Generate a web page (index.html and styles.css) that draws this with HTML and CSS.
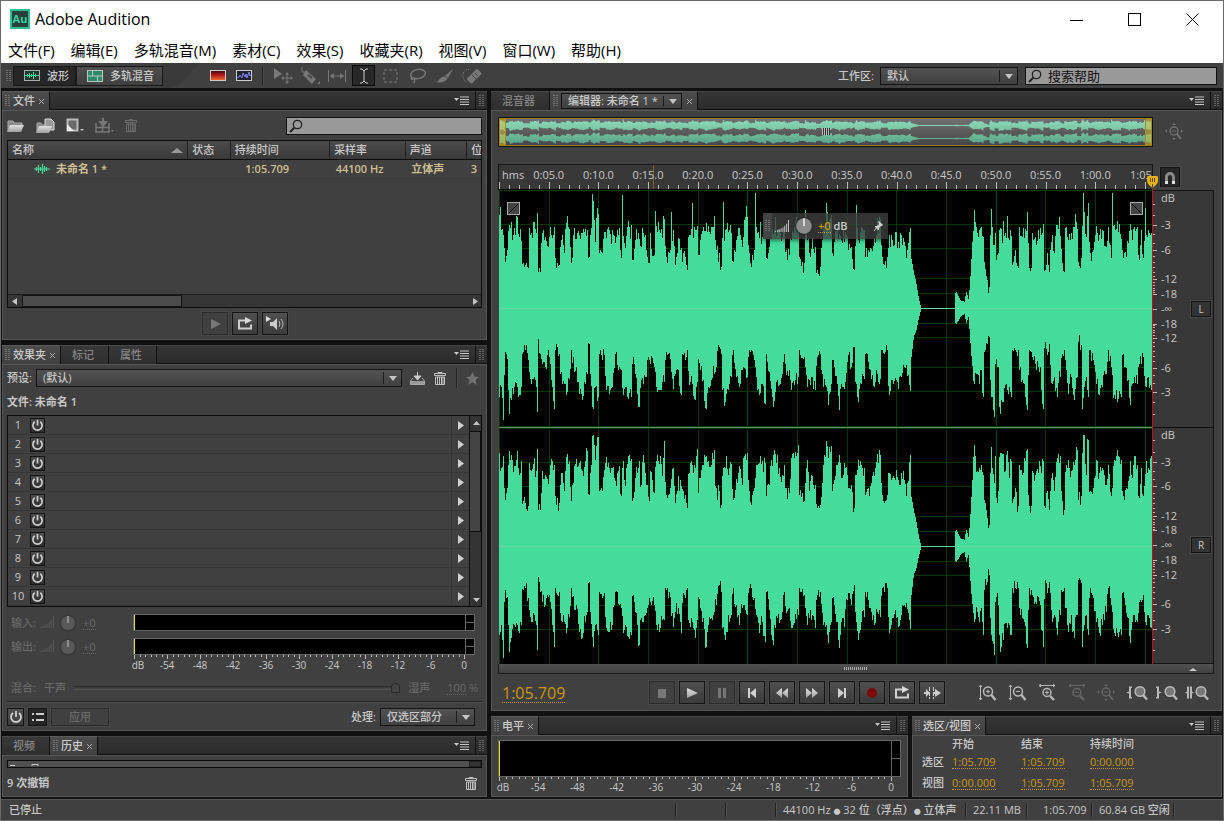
FILE: index.html
```
<!DOCTYPE html>
<html lang="zh-CN">
<head>
  <meta charset="UTF-8" />
  <meta name="viewport" content="width=device-width, initial-scale=1.0" />
  <title>Adobe Audition</title>
  <link rel="stylesheet" href="styles.css">
</head>
<body>

  <svg class="sprite" width="0" height="0" aria-hidden="true">
    <defs>
      <linearGradient id="steel" x1="0" y1="0" x2="0" y2="1"><stop offset="0" stop-color="#e2e2e2"/><stop offset="1" stop-color="#a0a0a0"/></linearGradient>
      <linearGradient id="heat" x1="0" y1="0" x2="0" y2="1"><stop offset="0" stop-color="#3c0818"/><stop offset="0.45" stop-color="#b01818"/><stop offset="1" stop-color="#f07030"/></linearGradient>
      <linearGradient id="over" x1="0" y1="0" x2="0" y2="1"><stop offset="0" stop-color="#8fdcbc"/><stop offset="1" stop-color="#58a385"/></linearGradient>
    </defs>
    <symbol id="i-grip" viewBox="0 0 5 12"><path d="M1 0v12M4 0v12" stroke="#999" stroke-width="1" stroke-dasharray="1 1"/></symbol>
    <symbol id="i-x" viewBox="0 0 7 7"><path d="M1 1l5 5M6 1l-5 5" stroke="#aaa" fill="none"/></symbol>
    <symbol id="i-menu" viewBox="0 0 15 9"><path d="M0 2h5l-2.500 3z" fill="#c8c8c8"/><path d="M6 1h9M6 3.500h9M6 6h9M6 8.500h9" stroke="#c8c8c8"/></symbol>
    <symbol id="i-search" viewBox="0 0 14 14"><circle cx="8.500" cy="5.500" r="4.200" fill="none" stroke="#222" stroke-width="1.300"/><path d="M5.500 8.500L1 13" stroke="#222" stroke-width="2"/></symbol>
    <symbol id="i-power" viewBox="0 0 14 14"><path d="M4 3a5 5 0 1 0 6 0" fill="none" stroke="#cfcfcf" stroke-width="1.800"/><path d="M7 1v6" stroke="#cfcfcf" stroke-width="1.800"/></symbol>
    <symbol id="i-trash" viewBox="0 0 12 13"><path d="M4 1.500V.5h4v1M.5 3.500v-2h11v2z" fill="none" stroke="currentColor"/><path d="M1.500 5h9V12.500h-9z" fill="none" stroke="currentColor"/><path d="M3.500 5v7M5.500 5v7M7.500 5v7M9 5v7" stroke="currentColor"/></symbol>
    <symbol id="i-loop" viewBox="0 0 16 14"><path d="M9 3.500H2v8h12V7.500" fill="none" stroke="#d0d0d0" stroke-width="2"/><path d="M8 0l7 3.500L8 7z" fill="#d8d8d8"/></symbol>
    <symbol id="i-lens" viewBox="0 0 20 18">
      <circle cx="11" cy="7.500" r="4.500" fill="none" stroke="currentColor" stroke-width="1.500"/><path d="M14.500 11l4 5" stroke="currentColor" stroke-width="2.400"/>
    </symbol>
    <symbol id="i-lens-full" viewBox="0 0 14 18">
      <circle cx="6" cy="7.500" r="4.800" fill="#777" stroke="#bbb" stroke-width="1.500"/><path d="M9 11l4 4.500" stroke="#bbb" stroke-width="2.400"/>
    </symbol>
    <symbol id="i-knob" viewBox="0 0 18 18"><circle cx="9" cy="9" r="8.500" fill="#2a2a2a" opacity=".6"/><circle cx="9" cy="9" r="7" fill="currentColor"/><path d="M9 2v7" stroke="#fff" stroke-width="1.200"/></symbol>
    <symbol id="i-steps" viewBox="0 0 16 14"><path d="M.5 13v-1M2.500 13v-2M4.500 13v-3M6.500 13v-4M8.500 13V8M10.500 13V6M12.500 13V4M14.500 13V0" stroke="currentColor"/></symbol>
    <symbol id="i-wave" viewBox="0 0 16 12"><path d="M0 6h16M2.500 4v4M4.500 2v8M6.500 4v4M8.500 1v10M10.500 3v6M12.500 4v4" stroke="#45dc9b" stroke-width="1.200"/></symbol>
  </svg>

  <div class="app">
    <header class="titlebar">
      <svg class="logo" viewBox="0 0 20 20"><rect x="1" y="1" width="18" height="18" fill="#274039" stroke="#2fbf93" stroke-width="2"/><text x="10" y="14" text-anchor="middle" class="logo-text">Au</text></svg>
      <h1>Adobe Audition</h1>
      <div class="window-buttons">
        <button aria-label="最小化"><svg width="13" height="13"><path d="M0 7.500h13" stroke="#000"/></svg></button>
        <button aria-label="最大化"><svg width="13" height="13"><rect x=".5" y=".5" width="12" height="12" fill="none" stroke="#000"/></svg></button>
        <button aria-label="关闭"><svg width="13" height="13"><path d="M.5.5l12 12M12.500.5l-12 12" stroke="#000" fill="none"/></svg></button>
      </div>
    </header>

    <nav class="menubar">
      <a href="#">文件(F)</a><a href="#">编辑(E)</a><a href="#">多轨混音(M)</a><a href="#">素材(C)</a><a href="#">效果(S)</a><a href="#">收藏夹(R)</a><a href="#">视图(V)</a><a href="#">窗口(W)</a><a href="#">帮助(H)</a>
    </nav>

    <div class="toolbar">
      <svg class="grip tall"><use href="#i-grip"/></svg>
      <button class="mode active"><svg width="16" height="11"><rect x=".5" y=".5" width="15" height="10" fill="#1f3a30" stroke="#aaa"/><path d="M1 5.500h14M3.500 4v3M5.500 3v5M7.500 4v3M9.500 2v7M11.500 4v3" stroke="#45dc9b"/></svg>波形</button>
      <button class="mode multi"><svg width="16" height="12"><rect width="16" height="12" fill="#2e8a68"/><path d="M0 .5h16M0 6h16M0 11.500h16M.5 0v12M15.500 0v12M5.500 0v6M10.500 6v6" stroke="#b5c8c0" fill="none"/></svg>多轨混音</button>
      <svg class="slope" viewBox="0 0 42 25" preserveAspectRatio="none"><path d="M0 0h42C26 2 26 23 6 25H0z" fill="#3a3a3a"/></svg>
      <button class="tool view" aria-label="频谱"><svg width="16" height="11"><rect x=".5" y=".5" width="15" height="10" fill="url(#heat)" stroke="#ccc"/></svg></button>
      <button class="tool view" aria-label="音高"><svg width="16" height="11"><rect x=".5" y=".5" width="15" height="10" fill="#22222c" stroke="#ccc"/><path d="M1 8l2-1 1-2 2 3 1-5 2 4 1-3 1 4 2-6 1 4 1-1" stroke="#8080ff" fill="none"/></svg></button>
      <span class="divider"></span>
      <button class="tool" aria-label="移动" disabled><svg width="20" height="18"><path d="M1 1l8 6-8 5z" fill="#777"/><path d="M14 7v8M10 11h8" stroke="#777"/><path d="M14 5l-2 2.500h4zM14 17l-2-2.500h4zM8 11l2.500-2v4zM20 11l-2.500-2v4z" fill="#777"/></svg></button>
      <button class="tool" aria-label="剃刀" disabled><svg width="20" height="18"><path d="M6 3l10 9-4 5L3 8z" fill="#777"/><path d="M2 0v5h5" stroke="#777" fill="none"/><path d="M8 8l4 3" stroke="#444" stroke-width="2"/><path d="M20 14v3h-3z" fill="#777"/></svg></button>
      <button class="tool" aria-label="滑动" disabled><svg width="20" height="18"><path d="M1.500 3v12M18.500 3v12M3 9h14" stroke="#777"/><path d="M3 9l4-3v6zM17 9l-4-3v6z" fill="#777"/></svg></button>
      <button class="tool active" aria-label="时间选择"><svg width="12" height="16"><path d="M2 1h2l2 2 2-2h2M6 3v10M2 15h2l2-2 2 2h2" stroke="#ccc" fill="none"/></svg></button>
      <button class="tool" aria-label="框选" disabled><svg width="16" height="14"><rect x="1" y="1" width="13" height="12" fill="none" stroke="#777" stroke-dasharray="3 2"/></svg></button>
      <button class="tool" aria-label="套索" disabled><svg width="20" height="16"><ellipse cx="10" cy="6" rx="7.500" ry="4.500" fill="none" stroke="#777" stroke-width="1.500" transform="rotate(-10 10 6)"/><path d="M4 9c-2 2 0 3 3 2l-1 4" fill="none" stroke="#777" stroke-width="1.300"/></svg></button>
      <button class="tool" aria-label="画笔" disabled><svg width="18" height="16"><path d="M17 1L9 8l3 2zM9 8.500L11.500 11C9 14 5 15 0 14c4-1 4-6 9-5.500z" fill="#777"/></svg></button>
      <button class="tool" aria-label="污点修复" disabled><svg width="20" height="16"><path d="M6 11L15 2l3.500 3.500-9 9z" fill="#777" stroke="#777" stroke-width="2" stroke-linejoin="round"/><path d="M7 1.500C3 1 1 4 1 7s1 6 4 8" fill="none" stroke="#777" stroke-dasharray="1 1"/><path d="M10 7l4 4M13 5l3 3" stroke="#444"/></svg></button>
      <span class="spacer"></span>
      <label class="caption" for="workspace">工作区:</label>
      <span class="select workspace"><select id="workspace"><option>默认</option></select></span>
      <label class="search help"><svg width="14" height="14"><use href="#i-search"/></svg><input type="text" value="搜索帮助" aria-label="搜索帮助"></label>
    </div>

    <main class="workspace-area">
      <div class="left-column">

        <section class="panel files">
          <div class="tabs">
            <button class="tab active"><svg class="grip"><use href="#i-grip"/></svg>文件<svg class="close"><use href="#i-x"/></svg></button>
            <span class="tab-fill"></span><button class="panel-menu" aria-label="面板菜单"><svg width="15" height="9"><use href="#i-menu"/></svg></button><span class="tab-end"><svg class="grip"><use href="#i-grip"/></svg></span>
          </div>
          <div class="body">
            <div class="file-tools">
              <button aria-label="打开"><svg width="18" height="14"><path d="M1 12V2h5l1 2h8v3" fill="#888" stroke="#aaa"/><path d="M0 13l3-7h14l-3 7z" fill="url(#steel)"/></svg></button>
              <button aria-label="导入"><svg width="19" height="16"><path d="M1 14V5h4l1 2h8v3" fill="#888" stroke="#aaa"/><path d="M9 1h6l3 3v8H9z" fill="#999" stroke="#ddd"/><path d="M0 15l3-7h13l-3 7z" fill="url(#steel)"/></svg></button>
              <button aria-label="新建"><svg width="18" height="15"><rect x="1.500" y="1.500" width="10" height="11" fill="#6a6a6a" stroke="#bbb" stroke-width="2"/><path d="M1 6l7 7H1z" fill="#eee"/><path d="M14 11h4l-2 2z" fill="#ccc"/></svg></button>
              <button aria-label="插入" disabled><svg width="19" height="16"><path d="M8 0v5M5 4l3 4 3-4z" stroke="#777" stroke-width="2" fill="#777"/><path d="M1 5v9h13V5M1 9.500h13M7.500 9.500v5" stroke="#777" fill="none" stroke-width="1.500"/><path d="M16 12h3l-1.500 2z" fill="#777"/></svg></button>
              <button class="dim" aria-label="关闭文件" disabled><svg width="12" height="13"><use href="#i-trash"/></svg></button>
              <label class="search"><svg width="14" height="14"><use href="#i-search"/></svg><input type="text" aria-label="搜索文件"></label>
            </div>
            <div class="file-list">
              <table>
                <colgroup><col class="c-name"><col class="c-state"><col class="c-time"><col class="c-rate"><col class="c-chan"><col></colgroup>
                <thead><tr><th>名称<svg class="sort" width="12" height="6"><path d="M0 6l6-5 6 5z" fill="#999"/></svg></th><th>状态</th><th>持续时间</th><th>采样率</th><th>声道</th><th>位</th></tr></thead>
                <tbody><tr><td><svg width="16" height="12"><use href="#i-wave"/></svg>未命名 1 *</td><td></td><td>1:05.709</td><td>44100 Hz</td><td>立体声</td><td>3</td></tr></tbody>
              </table>
              <div class="hscroll"><svg width="14" height="11"><path d="M9 2v7L4 5.500z" fill="#c4c4c4"/></svg><span class="thumb"></span><svg width="14" height="11"><path d="M6 2v7l5-3.500z" fill="#c4c4c4"/></svg></div>
            </div>
            <div class="preview-buttons">
              <button class="btn" aria-label="播放" disabled><svg width="12" height="12"><path d="M2 1l10 5-10 5z" fill="#777"/></svg></button>
              <button class="btn" aria-label="循环"><svg width="16" height="14"><use href="#i-loop"/></svg></button>
              <button class="btn" aria-label="自动播放"><svg width="18" height="15"><path d="M0 0l5 3-5 3z" fill="#ddd"/><path d="M4 6h3l4-4v12l-4-4H4z" fill="#ccc"/><path d="M13 5q2 3 0 6M15 3q4 5 0 10" stroke="#bbb" fill="none"/></svg></button>
            </div>
          </div>
        </section>

        <section class="panel effects">
          <div class="tabs">
            <button class="tab active"><svg class="grip"><use href="#i-grip"/></svg>效果夹<svg class="close"><use href="#i-x"/></svg></button>
            <button class="tab">标记</button><button class="tab">属性</button>
            <span class="tab-fill"></span><button class="panel-menu" aria-label="面板菜单"><svg width="15" height="9"><use href="#i-menu"/></svg></button><span class="tab-end"><svg class="grip"><use href="#i-grip"/></svg></span>
          </div>
          <div class="body">
            <div class="preset-row">
              <label for="preset">预设:</label>
              <span class="select preset"><select id="preset"><option>(默认)</option></select></span>
              <button aria-label="保存"><svg width="15" height="13"><path d="M7.500 0v6M4 4l3.500 4L11 4z" fill="#ccc" stroke="#ccc"/><path d="M3 6L.5 9v3.500h14V9L12 6" fill="none" stroke="#aaa"/><path d="M1 9h13v3H1z" fill="#999"/></svg></button>
              <button class="lit" aria-label="删除"><svg width="12" height="13"><use href="#i-trash"/></svg></button>
              <span class="divider"></span>
              <button aria-label="收藏" disabled><svg width="13" height="13"><path d="M6.500 0l2 4.500 4.500.4-3.500 3 1.200 5-4.200-2.700L2.300 13l1.200-5L0 5l4.500-.5z" fill="#707070"/></svg></button>
            </div>
            <p class="target">文件: 未命名 1</p>
            <div class="rack">
              <ol class="slots" id="slots"></ol>
              <div class="vscroll"><svg width="12" height="15"><path d="M3 9h7L6.500 5z" fill="#c4c4c4"/></svg><span class="thumb"></span><svg width="12" height="12"><path d="M3 4h7L6.500 8z" fill="#c4c4c4"/></svg></div>
            </div>
            <div class="io">
              <div class="io-row"><span>输入:</span><svg class="steps" width="15" height="13"><use href="#i-steps"/></svg><svg class="knob" width="18" height="18"><use href="#i-knob"/></svg><span class="gain"><u>+0</u></span><div class="meter"><i></i></div></div>
              <div class="io-row"><span>输出:</span><svg class="steps" width="15" height="13"><use href="#i-steps"/></svg><svg class="knob" width="18" height="18"><use href="#i-knob"/></svg><span class="gain"><u>+0</u></span><div class="meter"><i></i></div></div>
              <div class="db-scale indent"></div>
            </div>
            <div class="mix-row"><label for="mix">混合:</label><span>干声</span><input id="mix" type="range" value="100" disabled><span>湿声</span><span class="pct"><u>100</u> %</span></div>
            <div class="rack-footer">
              <button class="btn small" aria-label="开关"><svg width="14" height="14"><use href="#i-power"/></svg></button>
              <button class="btn small pressed" aria-label="列表"><svg width="14" height="12"><path d="M1 3h2M1 9h2M5 3h8M5 9h8" stroke="#ccc" stroke-width="2"/></svg></button>
              <button class="btn apply" disabled>应用</button>
              <span class="spacer"></span>
              <label for="process">处理:</label>
              <span class="select process"><select id="process"><option>仅选区部分</option></select></span>
            </div>
          </div>
        </section>

        <section class="panel history">
          <div class="tabs">
            <button class="tab">视频</button>
            <button class="tab active"><svg class="grip"><use href="#i-grip"/></svg>历史<svg class="close"><use href="#i-x"/></svg></button>
            <span class="tab-fill"></span><button class="panel-menu" aria-label="面板菜单"><svg width="15" height="9"><use href="#i-menu"/></svg></button><span class="tab-end"><svg class="grip"><use href="#i-grip"/></svg></span>
          </div>
          <div class="body">
            <div class="history-list"><svg width="40" height="5"><path d="M2 4.500h5M24 5V3.500h6V5" stroke="#ccc" fill="none"/></svg><span></span></div>
            <div class="history-foot"><span>9 次撤销</span><button class="lit" aria-label="删除"><svg width="12" height="13"><use href="#i-trash"/></svg></button></div>
          </div>
        </section>
      </div>

      <div class="right-column">
        <section class="panel editor">
          <div class="tabs">
            <button class="tab">混音器</button>
            <div class="tab active"><svg class="grip"><use href="#i-grip"/></svg><span class="select file"><select aria-label="编辑器"><option>编辑器: 未命名 1 *</option></select></span><svg class="close"><use href="#i-x"/></svg></div>
            <span class="tab-fill"></span><button class="panel-menu" aria-label="面板菜单"><svg width="15" height="9"><use href="#i-menu"/></svg></button><span class="tab-end"><svg class="grip"><use href="#i-grip"/></svg></span>
          </div>
          <div class="body">
            <div class="overview-row">
              <div class="overview"><svg viewBox="0 0 1959 1416" preserveAspectRatio="none"><path id="overview-path" fill="url(#over)"/></svg><b class="handle"></b><b class="handle end"></b><b class="mid-grip"></b></div>
              <div class="side"><svg class="off" width="20" height="18"><circle cx="9" cy="8" r="4" fill="none" stroke="currentColor" stroke-width="1.500"/><path d="M12 11l4 5" stroke="currentColor" stroke-width="2"/><path d="M7 8h4" stroke="currentColor"/><path d="M9 0l2 2H7zM0 8l2-2v4zM18 8l-2-2v4zM9 17l-2-2h4z" fill="currentColor"/></svg></div>
            </div>
            <div class="ruler-row">
              <div class="ruler"><span class="unit">hms</span><div class="ruler-clip" id="ruler"></div><svg class="playhead" width="11" height="14"><path d="M1 0h9q1 0 1 2v3q0 3-5.500 7Q0 8 0 5V2q0-2 1-2z" fill="#e8b010"/><path d="M3.500 2v4M5.500 2v4M7.500 2v4M5.500 8v6" stroke="#6a4a00"/></svg></div>
              <div class="side"><button class="btn snap" aria-label="对齐"><svg width="12" height="13"><path d="M2.500 13V6a3.500 3.500 0 0 1 7 0v7" fill="none" stroke="#888" stroke-width="3"/><path d="M2.500 13v-3M9.500 13v-3" stroke="#ddd" stroke-width="3"/></svg></button></div>
            </div>
            <div class="wave-row">
              <div class="wave" id="wave">
                <svg class="channel" viewBox="0 0 1959 708" preserveAspectRatio="none"></svg>
                <svg class="channel" viewBox="0 0 1959 708" preserveAspectRatio="none"></svg>
                <svg class="fade" width="13" height="13"><rect x=".5" y=".5" width="12" height="12" fill="#444" stroke="#aaa"/><path d="M2 11l9-9" stroke="#000"/></svg>
                <svg class="fade out" width="13" height="13"><rect x=".5" y=".5" width="12" height="12" fill="#444" stroke="#aaa"/><path d="M2 2l9 9" stroke="#000"/></svg>
                <div class="hud"><span class="hud-grip"><svg class="grip"><use href="#i-grip"/></svg></span><svg width="15" height="13"><use href="#i-steps"/></svg><svg class="knob" width="20" height="20"><use href="#i-knob"/></svg><span><u>+0</u> dB</span><svg class="pin" width="9" height="10"><path d="M5 0l4 4-1 1-1 0-2 2 0 2-1 0-3-3 0-1 2 0 2-2-1-2z" fill="#ccc"/><path d="M3 6L0 10" stroke="#ccc"/></svg></div>
              </div>
              <div class="levels">
                <div class="level-scale"><span class="unit">dB</span><button class="btn chan">L</button></div>
                <div class="level-scale"><span class="unit">dB</span><button class="btn chan">R</button></div>
              </div>
            </div>
            <div class="wave-scroll"><i></i><svg width="8" height="4"><path d="M0 4l4-3 4 3z" fill="#ccc"/></svg></div>
            <div class="transport">
              <output class="time">1:05.709</output>
              <button class="btn" aria-label="停止" disabled><svg width="16" height="14"><path d="M4 3h8v9H4z" fill="#777"/></svg></button>
              <button class="btn" aria-label="播放"><svg width="16" height="14"><path d="M3 2l11 5-11 5z" fill="url(#steel)"/></svg></button>
              <button class="btn" aria-label="暂停" disabled><svg width="16" height="14"><path d="M4 2h3v10H4zM9 2h3v10H9z" fill="#777"/></svg></button>
              <button class="btn" aria-label="上一个"><svg width="16" height="14"><path d="M4 2h2v10H4zM12 2v10L6 7z" fill="#d0d0d0"/></svg></button>
              <button class="btn" aria-label="快退"><svg width="16" height="14"><path d="M8 2v10L2 7zM14 2v10L8 7z" fill="url(#steel)"/></svg></button>
              <button class="btn" aria-label="快进"><svg width="16" height="14"><path d="M2 2v10l6-5zM8 2v10l6-5z" fill="url(#steel)"/></svg></button>
              <button class="btn" aria-label="下一个"><svg width="16" height="14"><path d="M10 2h2v10h-2zM4 2v10l6-5z" fill="#d0d0d0"/></svg></button>
              <button class="btn" aria-label="录制"><svg width="16" height="14"><circle cx="8" cy="7" r="5" fill="#7c0a0a"/></svg></button>
              <button class="btn" aria-label="循环播放"><svg width="16" height="14"><use href="#i-loop"/></svg></button>
              <button class="btn" aria-label="跳过"><svg width="17" height="14"><path d="M5.500 1v12M9.500 1v12" stroke="#ccc" stroke-dasharray="4 1"/><path d="M0 6h2V3l4 4-4 4V8H0zM9 6h2V3l6 4-6 4V8H9z" fill="#ccc"/></svg></button>
              <span class="spacer"></span>
              <button class="zoom-btn" aria-label="放大振幅"><svg width="20" height="18"><use href="#i-lens"/><path d="M9 7.500h4M11 5.500v4M3.500 1v15M2 3l1.500-2L5 3M2 14l1.500 2L5 14" stroke="currentColor" fill="none"/></svg></button>
              <button class="zoom-btn" aria-label="缩小振幅"><svg width="20" height="18"><use href="#i-lens"/><path d="M9 7.500h4M3.500 1v15M2 3l1.500-2L5 3M2 14l1.500 2L5 14" stroke="currentColor" fill="none"/></svg></button>
              <button class="zoom-btn" aria-label="放大时间"><svg width="20" height="18"><path d="M2 1.500h16M4 0L2 1.500 4 3M16 0l2 1.500L16 3" stroke="currentColor" fill="none"/><circle cx="10" cy="8.500" r="4" fill="none" stroke="currentColor" stroke-width="1.500"/><path d="M13 12l4 4" stroke="currentColor" stroke-width="2.400"/><path d="M8 8.500h4M10 6.500v4" stroke="currentColor"/></svg></button>
              <button class="zoom-btn off" aria-label="缩小时间" disabled><svg width="20" height="18"><path d="M2 1.500h16M4 0L2 1.500 4 3M16 0l2 1.500L16 3" stroke="currentColor" fill="none"/><circle cx="10" cy="8.500" r="4" fill="none" stroke="currentColor" stroke-width="1.500"/><path d="M13 12l4 4" stroke="currentColor" stroke-width="2.400"/><path d="M8 8.500h4" stroke="currentColor"/></svg></button>
              <button class="zoom-btn off" aria-label="全部缩小" disabled><svg width="20" height="18"><circle cx="9" cy="8" r="4" fill="none" stroke="currentColor" stroke-width="1.500"/><path d="M12 11l4 5" stroke="currentColor" stroke-width="2"/><path d="M7 8h4" stroke="currentColor"/><path d="M9 0l2 2H7zM0 8l2-2v4zM18 8l-2-2v4zM9 17l-2-2h4z" fill="currentColor"/></svg></button>
              <button class="zoom-btn" aria-label="缩放入点"><svg width="22" height="18"><use href="#i-lens-full" x="8" width="14" height="18"/><path d="M6 2.500H3v5L0 8.500l3 1v5h3v-1.500H5v-9h1z" fill="currentColor"/></svg></button>
              <button class="zoom-btn" aria-label="缩放出点"><svg width="22" height="18"><use href="#i-lens-full" x="8" width="14" height="18"/><path d="M0 2.500h3v5l3 1-3 1v5H0V13h1V4H0z" fill="currentColor"/></svg></button>
              <button class="zoom-btn" aria-label="缩放选区"><svg width="24" height="18"><use href="#i-lens-full" x="10" width="14" height="18"/><path d="M4 2.500H2v5L0 8.500l2 1v5h2zM5 2.500h2v5l2 1-2 1v5H5z" fill="currentColor"/></svg></button>
            </div>
          </div>
        </section>

        <div class="bottom-row">
          <section class="panel meters">
            <div class="tabs">
              <button class="tab active"><svg class="grip"><use href="#i-grip"/></svg>电平<svg class="close"><use href="#i-x"/></svg></button>
              <span class="tab-fill"></span><button class="panel-menu" aria-label="面板菜单"><svg width="15" height="9"><use href="#i-menu"/></svg></button><span class="tab-end"><svg class="grip"><use href="#i-grip"/></svg></span>
            </div>
            <div class="body"><div class="meter big"><i></i></div><div class="db-scale"></div></div>
          </section>
          <section class="panel selection">
            <div class="tabs">
              <button class="tab active"><svg class="grip"><use href="#i-grip"/></svg>选区/视图<svg class="close"><use href="#i-x"/></svg></button>
              <span class="tab-fill"></span><button class="panel-menu" aria-label="面板菜单"><svg width="15" height="9"><use href="#i-menu"/></svg></button><span class="tab-end"><svg class="grip"><use href="#i-grip"/></svg></span>
            </div>
            <div class="body">
              <table>
                <thead><tr><td></td><th>开始</th><th>结束</th><th>持续时间</th></tr></thead>
                <tbody>
                  <tr><th>选区</th><td><u>1:05.709</u></td><td><u>1:05.709</u></td><td><u>0:00.000</u></td></tr>
                  <tr><th>视图</th><td><u>0:00.000</u></td><td><u>1:05.709</u></td><td><u>1:05.709</u></td></tr>
                </tbody>
              </table>
            </div>
          </section>
        </div>
      </div>
    </main>

    <footer class="status">
      <span class="state">已停止</span>
      <span class="cell blank"></span><span class="cell blank"></span>
      <span class="cell format">44100 Hz <small>●</small> 32 位（浮点）<small>●</small> 立体声</span>
      <span class="cell size">22.11 MB</span>
      <span class="cell length">1:05.709</span>
      <span class="cell free">60.84 GB 空闲</span>
      <span class="cell tail"></span>
    </footer>
  </div>

  <script src="app.js"></script>
</body>
</html>
```
FILE: styles.css
```
*, *::before, *::after {
  box-sizing: border-box;
}

body {
  margin: 0;
  background: #111;
  color: #c8c8c8;
  font-family: "Open Sans", "Noto Sans CJK SC", sans-serif;
  font-size: 11px;
  font-weight: 500;
  line-height: 16px;
}

button, input, select {
  font: inherit;
  color: inherit;
  padding: 0;
  margin: 0;
  border: 0;
  background: none;
}

svg {
  flex: none;
  display: block;
}

p, h1, ol {
  margin: 0;
  padding: 0;
}

u {
  text-decoration: none;
  border-bottom: 1px dotted currentColor;
  display: inline-block;
  line-height: 13px;
}

.sprite {
  position: absolute;
}

.app {
  min-height: 100vh;
  display: flex;
  flex-direction: column;
  border: 1px solid #6a6a6a;
}

.spacer {
  flex: 1;
}

/* title + menu */
.titlebar {
  height: 36px;
  background: #fff;
  color: #000;
  display: flex;
  align-items: center;
  padding: 0 2px 0 9px;
}

.titlebar h1 {
  flex: 1;
  margin-left: 5px;
  font-size: 16px;
  font-weight: 400;
  line-height: 24px;
}

.logo {
  width: 20px;
  height: 20px;
}

.logo-text {
  fill: #35cfa0;
  font-size: 11px;
  font-weight: 700;
}

.window-buttons {
  display: flex;
}

.window-buttons button {
  width: 58px;
  height: 36px;
  display: flex;
  align-items: center;
  justify-content: center;
}

.menubar {
  height: 26px;
  background: #fff;
  display: flex;
  gap: 16px;
  padding: 0 7px;
}

.menubar a {
  color: #000;
  font-size: 15px;
  font-weight: 400;
  line-height: 26px;
  text-decoration: none;
}

/* toolbar */
.toolbar {
  height: 25px;
  margin-bottom: 3px;
  background: #404040;
  display: flex;
  align-items: center;
  padding: 0 6px 0 5px;
}

.grip {
  width: 5px;
  height: 12px;
}

.grip.tall {
  height: 20px;
  margin-right: 2px;
}

.mode {
  height: 20px;
  width: 63px;
  border: 1px solid #1a1a1a;
  background: linear-gradient(#4d4d4d, #404040);
  display: flex;
  align-items: center;
  gap: 7px;
  padding-left: 10px;
}

.mode.active {
  background: #262626;
}

.mode.multi {
  width: 87px;
}

.slope {
  width: 42px;
  height: 25px;
}

.tool {
  width: 27px;
  height: 21px;
  display: flex;
  align-items: center;
  justify-content: center;
}

.tool.view {
  width: 26px;
}

.tool.active {
  width: 23px;
  margin: 0 2px;
  background: #282828;
  border: 1px solid #0c0c0c;
}

.divider {
  width: 2px;
  height: 20px;
  margin: 0 5px;
  border-left: 1px solid #222;
  border-right: 1px solid #4c4c4c;
}

.caption {
  margin-right: 6px;
}

.select {
  display: flex;
  position: relative;
  height: 18px;
  border: 1px solid #141414;
  background: linear-gradient(#525252, #404040);
}

.select select {
  flex: 1;
  min-width: 0;
  appearance: none;
  padding-left: 6px;
  line-height: 16px;
}

.select::before {
  content: "";
  position: absolute;
  right: 17px;
  top: 2px;
  bottom: 2px;
  border-left: 1px solid #1c1c1c;
}

.select::after {
  content: "";
  position: absolute;
  right: 4px;
  top: 6px;
  border: 4px solid transparent;
  border-top: 5px solid #c4c4c4;
  border-bottom: 0;
}

.select.workspace {
  width: 138px;
  margin-right: 7px;
}

.search {
  height: 18px;
  display: flex;
  align-items: center;
  border: 1px solid #111;
  background: #999;
  padding-left: 2px;
}

.search input {
  flex: 1;
  min-width: 0;
  outline: 0;
  color: #111;
  padding-left: 6px;
}

.search.help {
  width: 192px;
}

.search.help input {
  font-size: 13px;
  font-weight: 400;
}

/* panels */
.workspace-area {
  flex: 1;
  display: flex;
  gap: 4px;
  padding: 0 1px;
}

.left-column,
.right-column {
  display: flex;
  flex-direction: column;
  gap: 5px;
  min-width: 0;
}

.left-column {
  flex: 485;
}

.right-column {
  flex: 731;
}

.panel {
  display: flex;
  flex-direction: column;
  min-width: 0;
}

.tabs {
  height: 19px;
  display: flex;
  background: #1a1a1a;
}

.tab {
  display: flex;
  align-items: center;
  padding: 0 14px 0 11px;
  background: linear-gradient(#383838, #2e2e2e);
  border-top: 1px solid #484848;
  border-right: 1px solid #111;
  color: #858585;
}

.tab.active {
  padding: 0 4px 0 3px;
  gap: 3px;
  background: linear-gradient(#4c4c4c, #404040);
  border-top-color: #5c5c5c;
  color: #ccc;
}

.tab .close {
  width: 7px;
  height: 7px;
}

.tab .select.file {
  width: 121px;
  height: 16px;
  margin-right: 1px;
}

.select.file select {
  line-height: 14px;
}

.select.file::after {
  top: 5px;
}

.tab-fill {
  flex: 1;
}

.tab-fill,
.panel-menu,
.tab-end {
  background: linear-gradient(#353535, #2b2b2b);
  border-top: 1px solid #444;
  border-bottom: 1px solid #111;
}

.panel-menu {
  width: 22px;
  display: flex;
  align-items: center;
  border-right: 1px solid #111;
}

.tab-end {
  width: 11px;
  display: flex;
  align-items: center;
  justify-content: center;
}

.body {
  flex: 1;
  display: flex;
  flex-direction: column;
  border: 1px solid #565656;
  background: #404040;
  padding: 0 4px;
}

.btn {
  width: 26px;
  height: 23px;
  display: flex;
  align-items: center;
  justify-content: center;
  border: 1px solid #151515;
  box-shadow: 0 0 0 1px #484848;
  background: linear-gradient(#505050, #3c3c3c);
}

.btn:disabled {
  border-color: #2c2c2c;
  background: #404040;
  color: #686868;
}

/* files */
.files {
  flex: 1;
}

.file-tools {
  height: 29px;
  display: flex;
  align-items: center;
  gap: 11px;
}

.file-tools .search {
  width: 196px;
  margin-left: auto;
}

.dim {
  color: #6c6c6c;
}

.lit {
  color: #c0c0c0;
}

.file-list {
  flex: 1;
  display: flex;
  flex-direction: column;
  border: 1px solid #0c0c0c;
  overflow: hidden;
}

.file-list table {
  width: 100%;
  table-layout: fixed;
  border-collapse: collapse;
}

.c-name { width: 38%; }
.c-state { width: 9%; }
.c-time { width: 21%; }
.c-rate { width: 16%; }
.c-chan { width: 13%; }

.file-list th,
.file-list td {
  height: 19px;
  padding: 0 4px;
  text-align: left;
  font-weight: 500;
  white-space: nowrap;
  overflow: hidden;
}

.file-list th {
  height: 18px;
  background: linear-gradient(#4a4a4a, #3a3a3a);
  border-bottom: 1px solid #0c0c0c;
}

.file-list th + th {
  border-left: 1px solid #222;
}

.file-list .sort {
  float: right;
  margin-top: 5px;
}

.file-list td {
  color: #cdbf94;
  font-weight: 600;
  border-bottom: 1px solid #383838;
  padding-right: 0;
}

.file-list td svg {
  float: left;
  margin: 2px 6px 0 22px;
}

.file-list td:nth-child(3) {
  padding-left: 15px;
}

.file-list td:nth-child(4),
.file-list td:nth-child(5) {
  padding-left: 6px;
}

.hscroll {
  margin-top: auto;
  height: 13px;
  display: flex;
  align-items: center;
  justify-content: space-between;
  background: #363636;
  border-top: 1px solid #1c1c1c;
}

.hscroll .thumb {
  width: 160px;
  height: 12px;
  margin-right: auto;
  background: #4c4c4c;
  border: 1px solid #141414;
}

.preview-buttons {
  display: flex;
  justify-content: center;
  gap: 4px;
  padding: 4px 0;
}

/* effects rack */
.preset-row {
  display: flex;
  align-items: center;
  margin-top: 3px;
}

.select.preset {
  flex: 1;
  margin: 0 8px 0 4px;
}

.preset-row button + button {
  margin-left: 9px;
}

.preset-row .divider {
  margin: 0 8px 0 10px;
}

.preset-row button:last-child {
  margin-right: 3px;
}

.target {
  margin: 6px 0 5px;
  font-weight: 600;
}

.rack {
  display: flex;
  border: 1px solid #0c0c0c;
}

.slots {
  flex: 1;
  list-style: none;
}

.slots li {
  height: 19px;
  display: flex;
  align-items: center;
  border-bottom: 1px solid #363636;
}

.slots .num {
  width: 20px;
  margin-right: 2px;
  text-align: center;
}

.slots .power {
  width: 15px;
  height: 15px;
  display: flex;
  justify-content: center;
  align-items: center;
  border: 1px solid #151515;
  background: linear-gradient(#4c4c4c, #2c2c2c);
}

.slots .more {
  width: 18px;
  height: 18px;
  margin-left: auto;
  padding-left: 6px;
  border-left: 1px solid #363636;
  display: flex;
  align-items: center;
}

.vscroll {
  width: 12px;
  display: flex;
  flex-direction: column;
  background: #343434;
  border-left: 1px solid #111;
}

.vscroll .thumb {
  height: 101px;
  margin-bottom: auto;
  background: #444;
  border: 1px solid #0e0e0e;
  border-left: 0;
}

.io {
  margin-top: 7px;
  color: #686868;
}

.io-row {
  height: 17px;
  margin-bottom: 7px;
  display: flex;
  align-items: center;
  gap: 4px;
  padding: 0 7px 0 4px;
}

.io-row:nth-child(2) {
  margin-bottom: 0;
}

.io-row span {
  width: 25px;
}

.io-row .gain {
  width: 48px;
  padding-left: 2px;
}

.steps {
  color: #5a5a5a;
}

.knob {
  color: #686868;
}

.io-row .knob {
  opacity: 0.6;
}

.meter {
  flex: 1;
  height: 17px;
  background: #000;
  border: 1px solid #666;
  display: flex;
  justify-content: space-between;
}

.meter::before {
  content: "";
  width: 1px;
  background: #e8e000;
}

.meter i {
  width: 9px;
  border-left: 1px solid #666;
  background: linear-gradient(#666, #666) center / 100% 1px no-repeat;
}

.db-scale {
  position: relative;
  height: 18px;
  margin: 0 10px 0 1px;
  color: #c8c8c8;
  font-size: 10px;
  line-height: 12px;
}

.db-scale.indent {
  margin: 0 18px 0 127px;
}

.db-scale i {
  position: absolute;
  top: 0;
  width: 1px;
  height: 2px;
  background: #bbb;
}

.db-scale i.major {
  height: 4px;
}

.db-scale span {
  position: absolute;
  top: 4px;
  width: 30px;
  margin-left: -15px;
  text-align: center;
}

.db-scale span:first-of-type {
  margin-left: -11px;
}

.mix-row {
  height: 24px;
  margin-top: 3px;
  padding: 0 4px;
  display: flex;
  align-items: center;
  gap: 8px;
  color: #686868;
}

.mix-row input {
  flex: 1;
  appearance: none;
  height: 12px;
  background: linear-gradient(#2a2a2a, #555) center / 100% 4px no-repeat;
}

.mix-row input::-webkit-slider-thumb {
  appearance: none;
  width: 9px;
  height: 10px;
  background: #444;
  border: 1px solid #2a2a2a;
  border-radius: 4px 4px 0 0;
}

.mix-row .pct {
  margin-left: 9px;
}

.rack-footer {
  border-top: 1px solid #222;
  box-shadow: inset 0 1px #4e4e4e;
  margin-top: 1px;
  padding: 6px 7px 4px 0;
  display: flex;
  align-items: center;
  gap: 4px;
}

.btn.small {
  width: 17px;
  height: 18px;
}

.btn.pressed {
  width: 19px;
  background: #262626;
}

.btn.apply {
  width: 58px;
  height: 18px;
}

.select.process {
  width: 95px;
}

/* history */
.history-list {
  height: 8px;
  margin-top: 4px;
  display: flex;
  justify-content: space-between;
  border: 1px solid #0c0c0c;
  background: #505050;
  overflow: hidden;
}

.history-list span {
  width: 12px;
  background: #333;
  border: 1px solid #222;
}

.history-foot {
  height: 28px;
  display: flex;
  justify-content: space-between;
  align-items: center;
  padding: 2px 5px 0 0;
  font-weight: 600;
}

/* editor */
.editor {
  flex: 1;
}

.editor .body {
  padding: 6px 7px 6px 6px;
}

.overview-row,
.ruler-row,
.wave-row {
  display: flex;
}

.side {
  width: 61px;
  padding-left: 7px;
  display: flex;
  align-items: center;
}

.overview-row .side {
  padding-left: 12px;
}

.off {
  color: #707070;
}

.overview-row {
  margin-bottom: 17px;
}

.overview {
  flex: 1;
  position: relative;
  height: 30px;
  border: 1px solid #111;
  outline: 1px solid #a07f18;
  outline-offset: -2px;
  background: linear-gradient(#727272, #454545);
  display: flex;
  padding: 1px;
}

.overview svg {
  flex: 1;
  min-width: 0;
  height: 26px;
}

.handle {
  position: absolute;
  top: 1px;
  bottom: 1px;
  left: 0;
  width: 7px;
  background: rgba(215, 190, 60, 0.5);
  border: 1px solid #b08a10;
}

.handle.end {
  left: auto;
  right: 0;
}

.mid-grip {
  position: absolute;
  left: 50%;
  top: 10px;
  width: 8px;
  height: 7px;
  margin-left: -4px;
  background: repeating-linear-gradient(90deg, #bbb 0 1px, #333 1px 2px);
}

.ruler {
  flex: 1;
  min-width: 0;
  position: relative;
  height: 26px;
  background: #383838;
  border: 1px solid #161616;
  border-bottom-color: #000;
}

.ruler .unit {
  position: absolute;
  left: 3px;
  top: 2px;
}

.ruler-clip {
  position: relative;
  height: 24px;
}

.ruler-clip span {
  position: absolute;
  top: 2px;
  width: 40px;
  margin-left: -20px;
  text-align: center;
}

.ruler-clip span:last-child {
  width: 24px;
  margin-left: -15px;
  text-align: left;
}

.ruler-clip i {
  position: absolute;
  bottom: 0;
  width: 1px;
  height: 4px;
  background: #bbb;
}

.ruler-clip i.major {
  height: 7px;
}

.ruler-clip i.cursor {
  height: 24px;
  background: #7d651c;
}

.playhead {
  position: absolute;
  right: -6px;
  bottom: -1px;
  z-index: 2;
}

.btn.snap {
  width: 20px;
  height: 20px;
  background: #262626;
}

.wave-row {
  flex: 1;
}

.wave {
  flex: 1;
  min-width: 0;
  position: relative;
  display: flex;
  flex-direction: column;
  background: #000;
  margin-left: 1px;
  border-right: 1px solid #d00000;
}

.channel {
  flex: 1 1 0;
  width: 100%;
  min-height: 0;
  shape-rendering: crispEdges;
}

.channel + .channel {
  border-top: 1px solid #5f915f;
}

.channel .grid {
  stroke: #003a00;
  fill: none;
  vector-effect: non-scaling-stroke;
}

.channel .shape {
  fill: #45dc9b;
}

.channel .zero {
  stroke: #62d89b;
  vector-effect: non-scaling-stroke;
}

.fade {
  position: absolute;
  left: 8px;
  top: 12px;
}

.fade.out {
  left: auto;
  right: 9px;
}

.hud {
  position: absolute;
  left: 264px;
  top: 23px;
  width: 125px;
  height: 26px;
  display: flex;
  align-items: center;
  background: rgba(62, 62, 62, 0.8);
  color: #ccc;
  font-weight: 600;
  box-shadow: 0 2px 3px rgba(0, 0, 0, 0.4);
}

.hud-grip {
  height: 26px;
  width: 9px;
  margin-right: 3px;
  display: flex;
  align-items: center;
  justify-content: center;
  background: #444;
}

.hud .knob {
  color: #8a8a8a;
  margin: 0 4px;
}

.hud u {
  color: #c8960c;
}

.hud .pin {
  margin-left: auto;
  margin-right: 5px;
}

.levels {
  width: 61px;
  display: flex;
  flex-direction: column;
  background: #383838;
  border: 1px solid #141414;
  border-left: 0;
}

.level-scale {
  flex: 1;
  position: relative;
  display: flex;
  align-items: center;
  justify-content: flex-end;
  padding-right: 2px;
}

.level-scale + .level-scale {
  border-top: 1px solid #0c0c0c;
}

.level-scale .unit {
  position: absolute;
  left: 8px;
  top: -1px;
}

.level-scale .mark {
  position: absolute;
  left: 8px;
  margin-top: -8px;
}

.level-scale i {
  position: absolute;
  left: 0;
  width: 2px;
  height: 1px;
  background: #bbb;
}

.level-scale i.major {
  width: 4px;
}

.btn.chan {
  width: 20px;
  height: 16px;
  background: #333;
  font-size: 10px;
}

.wave-scroll {
  height: 10px;
  display: flex;
  align-items: center;
  background: linear-gradient(#505050, #404040);
  border: 1px solid #1c1c1c;
  border-top: 0;
  padding: 0 16px 0 24px;
}

.wave-scroll i {
  width: 24px;
  height: 3px;
  margin: 0 auto;
  background: repeating-linear-gradient(90deg, #aaa 0 1px, transparent 1px 2px);
}

.transport {
  display: flex;
  align-items: center;
  gap: 4px;
  margin-top: 7px;
  padding-right: 4px;
}

.time {
  width: 147px;
  padding-left: 4px;
  color: #c8960c;
  font-size: 16px;
  line-height: 20px;
  font-weight: 400;
  text-decoration: underline dotted;
  text-underline-offset: 3px;
  text-decoration-thickness: 1px;
}

.zoom-btn {
  width: 26px;
  height: 23px;
  display: flex;
  align-items: center;
  justify-content: center;
  color: #b8b8b8;
}

.zoom-btn.off {
  color: #666;
}

/* bottom panels */
.bottom-row {
  height: 81px;
  display: flex;
  gap: 4px;
}

.meters {
  flex: 417;
}

.selection {
  flex: 310;
}

.meters .body {
  padding: 4px 6px 0;
}

.meter.big {
  flex: none;
  height: 37px;
}

.selection .body {
  padding: 1px 0 0 9px;
}

.selection table {
  border-collapse: collapse;
  table-layout: fixed;
  width: 237px;
}

.selection th,
.selection td {
  padding: 0;
  height: 21px;
  text-align: left;
  font-weight: 500;
}

.selection thead th,
.selection thead td {
  height: 14px;
  line-height: 14px;
}

.selection tr > :first-child {
  width: 30px;
}

.selection u {
  color: #c8960c;
}

/* status */
.status {
  height: 21px;
  margin-top: 2px;
  padding-left: 8px;
  display: flex;
  align-items: center;
  background: #404040;
  border-top: 1px solid #565656;
}

.state {
  flex: 1;
}

.cell {
  height: 14px;
  line-height: 14px;
  padding-left: 7px;
  border-left: 1px solid #222;
  box-shadow: inset 1px 0 #505050;
  white-space: nowrap;
}

.cell small {
  font-size: 7px;
}

.blank { width: 50px; }
.format { width: 190px; }
.size { width: 61px; }
.length { width: 65px; padding-left: 16px; }
.free { width: 82px; }
.tail { width: 50px; }
```
FILE: app.js
```
const DURATION = 65.709;
const WIDTH = 1959;
const MID = 354;

// x, upper edge, lower edge; a channel is 1959 x 708 units
const PEAKS_A = [
  12,85,630, 18,130,600, 24,95,700, 28,225,495, 36,190,515, 42,80,680, 48,92,640, 55,125,600, 64,80,600, 72,150,625, 76,110,600, 82,230,495, 90,235,490, 98,245,520, 101,115,555,
  108,138,590, 115,100,570, 121,140,600, 124,72,675, 128,255,455, 134,255,500, 140,140,530, 150,150,540, 160,150,510, 165,122,530, 170,110,600, 176,120,665, 180,215,490, 190,235,500,
  199,145,590, 205,200,590, 213,98,625, 222,110,575, 228,230,490, 237,125,555, 243,102,540, 250,115,620, 260,140,640, 268,110,590, 275,78,560, 280,210,470, 285,145,560, 292,30,665,
  300,105,600, 307,38,630, 311,200,500, 320,200,520, 326,135,505, 332,98,610, 340,130,620, 350,130,600, 360,170,500, 370,125,540, 376,215,550, 384,108,625, 390,185,600, 397,95,635,
  406,102,630, 412,220,510, 420,160,560, 430,110,660, 437,180,580, 443,92,590, 450,145,570, 460,230,520, 465,140,530, 475,205,540, 483,110,600, 494,95,610, 500,155,585, 506,48,585,
  511,210,495, 524,190,515, 533,130,605, 540,235,560, 548,155,550, 556,185,625, 562,200,505, 568,210,520, 575,250,490, 580,145,595, 590,120,590, 598,130,640, 604,72,585, 608,205,515,
  615,160,550, 622,120,580, 631,95,665, 638,110,600, 648,120,580, 655,75,560, 662,190,540, 670,200,480, 677,240,500, 681,155,610, 688,130,645, 692,95,620, 700,130,590, 706,118,570,
  712,225,490, 720,195,545, 730,125,600, 740,180,550, 743,100,540, 755,85,570, 762,200,490, 768,240,490, 776,190,520, 782,120,570, 790,115,625, 800,110,590, 808,115,650, 813,215,500,
  820,180,555, 832,90,660, 844,92,580, 850,130,595, 860,150,560, 866,120,500, 872,190,565, 880,205,550, 888,100,610, 896,100,595, 907,60,570, 911,210,490, 925,230,510, 935,105,600,
  942,200,580, 950,155,570, 958,180,610, 964,250,510, 975,240,500, 982,135,600
];
const PEAKS_B = [
  3,245,495, 8,120,600, 18,48,600, 24,100,655, 31,65,590, 36,200,520, 42,165,540, 50,120,590, 57,90,670, 62,160,590, 72,115,605, 80,150,525, 84,190,505, 92,180,540, 100,250,480,
  106,150,590, 114,105,645, 122,120,590, 130,130,575, 134,210,500, 143,190,525, 150,185,550, 160,155,600, 170,88,560, 178,92,575, 185,210,490, 190,235,500, 200,210,490, 205,145,625,
  215,160,580, 226,135,580, 233,165,605, 243,145,570, 252,165,540, 258,215,535, 264,170,565, 268,92,612, 272,210,520, 280,255,450, 288,290,430, 295,335,395, 302,363,366, 402,363,366,
  404,320,405, 408,315,412, 420,340,390, 434,345,380, 436,310,415, 444,335,390, 448,300,440, 454,200,520, 462,60,590, 470,140,560, 476,130,590, 482,120,550, 488,150,630, 492,225,495,
  500,280,470, 505,300,450, 508,145,580, 513,68,630, 521,175,690, 524,95,530, 528,220,515, 534,200,540, 538,85,680, 547,88,645, 555,140,595, 560,80,610, 567,160,600, 571,108,630,
  574,235,490, 584,190,490, 592,245,490, 596,120,550, 604,150,580, 612,100,590, 620,72,670, 626,245,490, 632,245,495, 635,140,510, 645,150,530, 658,125,540, 668,110,665, 673,250,465,
  680,200,505, 686,255,470, 694,145,590, 702,200,570, 709,100,630, 718,95,570, 725,230,500, 730,255,490, 736,120,550, 744,105,620, 752,140,570, 760,120,640, 769,75,570, 774,225,465,
  781,215,475, 786,85,665, 790,30,600, 796,150,570, 802,45,630, 808,200,490, 818,190,520, 828,105,590, 836,145,625, 846,130,600, 856,180,560, 864,120,490, 872,215,540, 880,105,625,
  892,95,635, 902,105,630, 907,215,500, 915,195,540, 922,170,580, 929,110,655, 935,160,590, 940,95,570, 950,120,590, 956,220,530, 962,130,530, 968,215,510, 976,110,600, 984,130,570,
  991,95,610, 997,110,600
];

// tall single peaks of the left channel: x, upper edge
const LEFT_SPIKES = [3,50, 279,12, 369,16, 468,62, 516,66, 579,38, 672,36, 741,48, 768,8, 918,60, 981,38, 1071,46, 1476,56, 1752,8, 1839,10, 1938,54];

const peaks = [];
function addPeaks(list, shift) {
  for (let i = 0; i < list.length; i += 3) {
    peaks.push([list[i] + shift, 364 - list[i + 1], list[i + 2] - 364]);
  }
}
addPeaks(PEAKS_A, -12);
addPeaks(PEAKS_B, 963);

function makeRandom(seed) {
  return () => {
    seed = (seed * 16807) % 2147483647;
    return seed / 2147483647;
  };
}

// one bar per pixel: the stored peak first, then a jittered run to the next one
function buildWave(channel) {
  const random = makeRandom(channel === 0 ? 421 : 97);
  const bars = [];
  let k = 0;
  let last = -1;
  for (let x = 0; x < WIDTH; x += 3) {
    while (k < peaks.length - 2 && peaks[k + 1][0] <= x) k++;
    const a = peaks[k];
    const b = peaks[k + 1];
    const t = Math.min(1, Math.max(0, (x - a[0]) / (b[0] - a[0])));
    const quiet = x > 1234 && x < 1420;
    let up = a[1] + (b[1] - a[1]) * t;
    let down = a[2] + (b[2] - a[2]) * t;
    if (!quiet && k === last) {
      up += (random() - 0.6) * 50;
      down += (random() - 0.6) * 44;
    } else if (!quiet) {
      up = a[1];
      down = a[2];
    }
    if (channel === 0 && up > 245) up -= random() * 60;
    last = k;
    bars.push([x, Math.max(1.5, up), Math.max(1.5, down)]);
  }
  if (channel === 0) {
    for (let i = 0; i < LEFT_SPIKES.length; i += 2) {
      bars[Math.round(LEFT_SPIKES[i] / 3)][1] = MID - LEFT_SPIKES[i + 1];
    }
  }
  return bars;
}

function barsToPath(bars, mid, scale, least) {
  return bars.map(([x, up, down]) =>
    `M${x} ${(mid - Math.max(least, up * scale)).toFixed(1)}h3V${(mid + Math.max(least, down * scale)).toFixed(1)}h-3z`).join("");
}

const svgs = document.querySelectorAll(".channel");
const scales = document.querySelectorAll(".level-scale");
const dbLines = [3, 6, 12, 18];
let overview = "";

svgs.forEach((svg, channel) => {
  const bars = buildWave(channel);
  let grid = "M0 1H1959M0 707H1959";
  for (let t = 0; t < DURATION; t += 5) {
    grid += `M${(t / DURATION * WIDTH + 1).toFixed(1)} 0V708`;
  }
  dbLines.forEach(db => {
    const h = MID * Math.pow(10, -db / 20);
    grid += `M0 ${MID - h}H1959M0 ${MID + h}H1959`;
  });
  svg.innerHTML = `<path class="grid" d="${grid}"/><path class="shape" d="${barsToPath(bars, MID, 1, 1.5)}"/><path class="zero" d="M0 354H1959"/>`;
  overview += barsToPath(bars, channel === 0 ? 354 : 1062, 0.95, 24);
});
document.getElementById("overview-path").setAttribute("d", overview);

// dB scale beside each channel
scales.forEach(scale => {
  let html = '<span class="mark" style="top:50%">-∞</span><i class="major" style="top:50%"></i>';
  for (let db = 1; db <= 18; db++) {
    const h = Math.pow(10, -db / 20) * 50;
    const cls = dbLines.includes(db) ? "major" : "";
    html += `<i class="${cls}" style="top:${50 - h}%"></i><i class="${cls}" style="top:${50 + h}%"></i>`;
    if (cls) {
      html += `<span class="mark" style="top:${50 - h}%">-${db}</span><span class="mark" style="top:${50 + h}%">-${db}</span>`;
    }
  }
  scale.insertAdjacentHTML("beforeend", html);
});

// time ruler, the last label is cut short by the end of the file
let ruler = `<i class="cursor" style="left:23.6%"></i>`;
let labels = "";
for (let s = 0; s < DURATION; s++) {
  const left = s / DURATION * 100;
  ruler += `<i class="${s % 5 === 0 ? "major" : ""}" style="left:${left}%"></i>`;
  if (s > 0 && s % 5 === 0) {
    const sec = String(s % 60).padStart(2, "0");
    const tail = s + 5 > DURATION ? "" : ".0";
    labels += `<span style="left:${left}%">${Math.floor(s / 60)}:${sec}${tail}</span>`;
  }
}
document.getElementById("ruler").innerHTML = ruler + labels;

// meter scales, -60 to 0 dB
document.querySelectorAll(".db-scale").forEach(scale => {
  let html = "";
  for (let db = -60; db <= 0; db++) {
    const left = (db + 60) / 60 * 100;
    html += `<i class="${db % 6 === 0 ? "major" : ""}" style="left:${left}%"></i>`;
    if (db % 6 === 0) html += `<span style="left:${left}%">${db === -60 ? "dB" : db}</span>`;
  }
  scale.innerHTML = html;
});

// effect slots
let slots = "";
for (let n = 1; n <= 10; n++) {
  slots += `<li><span class="num">${n}</span><button class="power" aria-label="效果 ${n}"><svg width="13" height="13"><use href="#i-power"/></svg></button><button class="more" aria-label="选择效果 ${n}"><svg width="6" height="9"><path d="M0 0v9l6-4.500z" fill="#d0d0d0"/></svg></button></li>`;
}
document.getElementById("slots").innerHTML = slots;
```
